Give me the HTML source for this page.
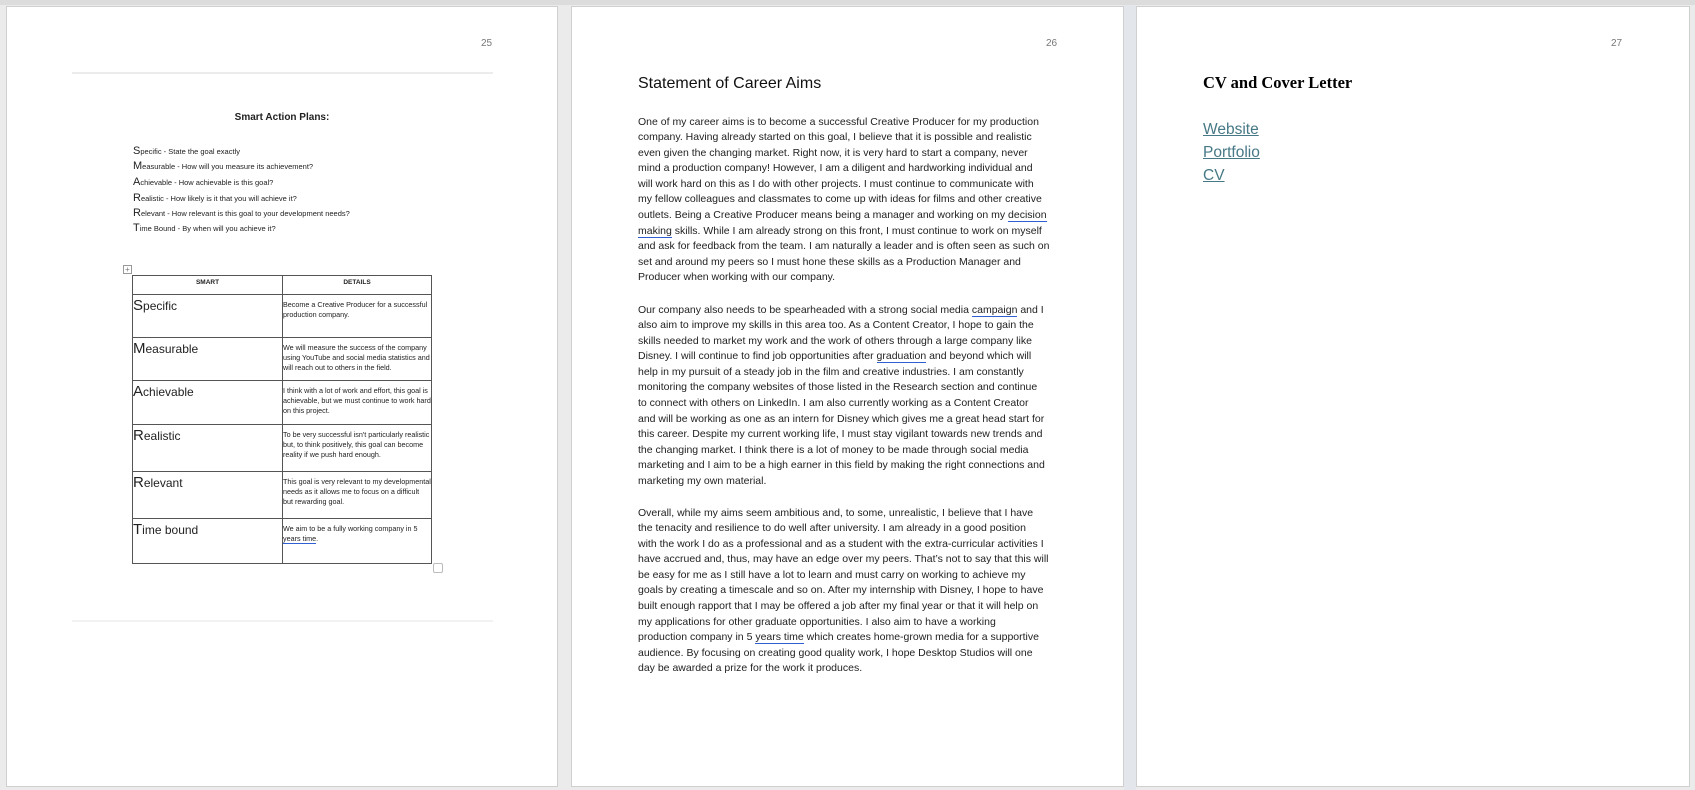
<!DOCTYPE html>
<html><head><meta charset="utf-8"><style>
*{margin:0;padding:0;box-sizing:border-box}
body{width:1695px;height:790px;background:#ebebeb;position:relative;overflow:hidden;font-family:"Liberation Sans",sans-serif;color:#222}
.top{position:absolute;left:0;top:0;width:1695px;height:5px;background:#dcdcdc}
.pg{position:absolute;top:6px;height:781px;background:#fff;border:1px solid #cfcfcf}
.num{position:absolute;font-size:10px;color:#777}
.abs{position:absolute;white-space:nowrap}
.hl{position:absolute;height:2px;background:#ececec}
.li{position:absolute;left:133px;font-size:7.5px;color:#222;white-space:nowrap}
.li b{font-weight:normal;font-size:11px}
table{position:absolute;left:132px;top:275px;width:300px;border-collapse:collapse}
td{border:1px solid #555;vertical-align:top;padding:0}
td.l{width:150px;font-size:12px;padding-top:2px}
td.l span{font-size:15px}
td.r{font-size:7.2px;line-height:9.8px;padding-top:5px;color:#222}
.p2{position:absolute;left:638px;font-size:10.5px;line-height:15.6px;color:#222;white-space:nowrap}
.p2 div{height:15.6px}
u.s{text-decoration:none;border-bottom:1.5px solid #2f5fd0}
.lnk{position:absolute;left:1203px;font-size:15.5px;color:#467886;text-decoration:underline}
</style></head><body>
<div class="top"></div>
<div style="position:absolute;left:1124px;top:5px;width:12px;height:785px;background:#e3e7ec"></div>

<div class="pg" style="left:6px;width:552px"></div>
<div class="num" style="left:481px;top:38px">25</div>
<div class="hl" style="left:72px;top:72px;width:421px"></div>
<div class="abs" style="left:0;width:564px;text-align:center;top:112px;font-size:10px;font-weight:bold">Smart Action Plans:</div>
<div class="li" style="top:145px"><b>S</b>pecific - State the goal exactly</div>
<div class="li" style="top:160px"><b>M</b>easurable - How will you measure its achievement?</div>
<div class="li" style="top:176px"><b>A</b>chievable - How achievable is this goal?</div>
<div class="li" style="top:192px"><b>R</b>ealistic - How likely is it that you will achieve it?</div>
<div class="li" style="top:207px"><b>R</b>elevant - How relevant is this goal to your development needs?</div>
<div class="li" style="top:222px"><b>T</b>ime Bound - By when will you achieve it?</div>
<div style="position:absolute;left:123px;top:265px;width:9px;height:9px;border:1px solid #999;font-size:8px;line-height:7px;text-align:center;color:#777">+</div>
<table>
<tr style="height:19px"><td style="text-align:center;font-size:6.5px;font-weight:bold;padding-top:3px">SMART</td><td style="text-align:center;font-size:6.5px;font-weight:bold;padding-top:3px">DETAILS</td></tr>
<tr style="height:43px"><td class="l"><span>S</span>pecific</td><td class="r">Become a Creative Producer for a successful production company.</td></tr>
<tr style="height:43px"><td class="l"><span>M</span>easurable</td><td class="r">We will measure the success of the company using YouTube and social media statistics and will reach out to others in the field.</td></tr>
<tr style="height:44px"><td class="l"><span>A</span>chievable</td><td class="r">I think with a lot of work and effort, this goal is achievable, but we must continue to work hard on this project.</td></tr>
<tr style="height:47px"><td class="l"><span>R</span>ealistic</td><td class="r">To be very successful isn't particularly realistic but, to think positively, this goal can become reality if we push hard enough.</td></tr>
<tr style="height:47px"><td class="l"><span>R</span>elevant</td><td class="r">This goal is very relevant to my developmental needs as it allows me to focus on a difficult but rewarding goal.</td></tr>
<tr style="height:45px"><td class="l"><span>T</span>ime bound</td><td class="r">We aim to be a fully working company in 5 <u class="s">years time</u>.</td></tr>
</table>
<div style="position:absolute;left:433px;top:563px;width:10px;height:10px;border:1px solid #bbb;border-radius:2px"></div>
<div class="hl" style="left:72px;top:620px;width:421px;background:#f2f2f2"></div>

<div class="pg" style="left:571px;width:553px"></div>
<div class="num" style="left:1046px;top:38px">26</div>
<div class="abs" style="left:638px;top:75px;font-size:16px;color:#111">Statement of Career Aims</div>
<div class="p2" style="top:114.5px">
<div>One of my career aims is to become a successful Creative Producer for my production</div>
<div>company. Having already started on this goal, I believe that it is possible and realistic</div>
<div>even given the changing market. Right now, it is very hard to start a company, never</div>
<div>mind a production company! However, I am a diligent and hardworking individual and</div>
<div>will work hard on this as I do with other projects. I must continue to communicate with</div>
<div>my fellow colleagues and classmates to come up with ideas for films and other creative</div>
<div>outlets. Being a Creative Producer means being a manager and working on my <u class="s">decision</u></div>
<div><u class="s">making</u> skills. While I am already strong on this front, I must continue to work on myself</div>
<div>and ask for feedback from the team. I am naturally a leader and is often seen as such on</div>
<div>set and around my peers so I must hone these skills as a Production Manager and</div>
<div>Producer when working with our company.</div>
</div>
<div class="p2" style="top:302.5px">
<div>Our company also needs to be spearheaded with a strong social media <u class="s">campaign</u> and I</div>
<div>also aim to improve my skills in this area too. As a Content Creator, I hope to gain the</div>
<div>skills needed to market my work and the work of others through a large company like</div>
<div>Disney. I will continue to find job opportunities after <u class="s">graduation</u> and beyond which will</div>
<div>help in my pursuit of a steady job in the film and creative industries. I am constantly</div>
<div>monitoring the company websites of those listed in the Research section and continue</div>
<div>to connect with others on LinkedIn. I am also currently working as a Content Creator</div>
<div>and will be working as one as an intern for Disney which gives me a great head start for</div>
<div>this career. Despite my current working life, I must stay vigilant towards new trends and</div>
<div>the changing market. I think there is a lot of money to be made through social media</div>
<div>marketing and I aim to be a high earner in this field by making the right connections and</div>
<div>marketing my own material.</div>
</div>
<div class="p2" style="top:505.5px">
<div>Overall, while my aims seem ambitious and, to some, unrealistic, I believe that I have</div>
<div>the tenacity and resilience to do well after university. I am already in a good position</div>
<div>with the work I do as a professional and as a student with the extra-curricular activities I</div>
<div>have accrued and, thus, may have an edge over my peers. That’s not to say that this will</div>
<div>be easy for me as I still have a lot to learn and must carry on working to achieve my</div>
<div>goals by creating a timescale and so on. After my internship with Disney, I hope to have</div>
<div>built enough rapport that I may be offered a job after my final year or that it will help on</div>
<div>my applications for other graduate opportunities. I also aim to have a working</div>
<div>production company in 5 <u class="s">years time</u> which creates home-grown media for a supportive</div>
<div>audience. By focusing on creating good quality work, I hope Desktop Studios will one</div>
<div>day be awarded a prize for the work it produces.</div>
</div>

<div class="pg" style="left:1136px;width:554px"></div>
<div class="num" style="left:1611px;top:38px">27</div>
<div class="abs" style="left:1203px;top:73px;font-family:'Liberation Serif',serif;font-weight:bold;font-size:16.5px;color:#000">CV and Cover Letter</div>
<div class="lnk" style="top:121px">Website</div>
<div class="lnk" style="top:144px">Portfolio</div>
<div class="lnk" style="top:167px">CV</div>
</body></html>
